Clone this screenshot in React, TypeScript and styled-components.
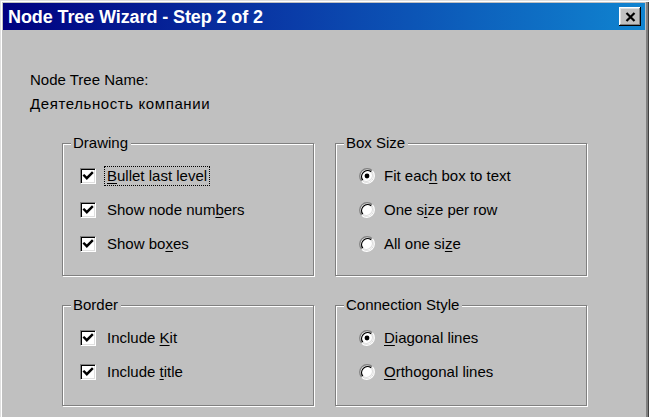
import React from "react";
import styled, { createGlobalStyle } from "styled-components";

const Global = createGlobalStyle`
  html, body { margin: 0; padding: 0; background: #c0c0c0; }
  body { font-family: "Liberation Sans", Arial, sans-serif; }
`;

const Window = styled.div`
  box-sizing: border-box;
  width: 649px;
  height: 417px;
  padding: 3px 4px 0 3px;
  background: #c0c0c0;
  box-shadow: inset 1px 1px #dfdfdf, inset 2px 2px #ffffff, inset -1px 0 #404040, inset -3px 0 #808080;
  display: flex;
  flex-direction: column;
  overflow: hidden;
`;

const TitleBar = styled.div`
  height: 27px;
  flex: none;
  display: flex;
  align-items: center;
  justify-content: space-between;
  padding: 0 4px 0 5px;
  background: linear-gradient(to right, #000080 0%, #0a3ca8 45%, #1084d0 100%);
`;

const Title = styled.span`
  color: #ffffff;
  font-family: "Liberation Sans", Arial, sans-serif;
  font-weight: bold;
  font-size: 18px;
  line-height: 20px;
  letter-spacing: -0.1px;
`;

const CloseButton = styled.div`
  width: 22px;
  height: 19px;
  background: #c0c0c0;
  box-shadow: inset -1px -1px #000000, inset 1px 1px #ffffff, inset -2px -2px #808080, inset 2px 2px #dfdfdf;
  display: flex;
  align-items: center;
  justify-content: center;
`;

const Body = styled.div`
  padding: 38px 0 0 27px;
  font-size: 15px;
  color: #000;
`;

const TextLine = styled.div<{ $spacing?: number }>`
  line-height: 24px;
  height: 24px;
  letter-spacing: ${(p) => p.$spacing ?? 0}px;
`;

const Grid = styled.div`
  margin: 27px 0 0 32px;
  display: grid;
  grid-template-columns: 252px 252px;
  grid-template-rows: 133px 101px;
  column-gap: 21px;
  row-gap: 29px;
`;

const Group = styled.div<{ $indent: number }>`
  position: relative;
  box-sizing: border-box;
  border: 1px solid #808080;
  box-shadow: inset 1px 1px #ffffff, 1px 1px #ffffff;
  padding: 15px 0 0 ${(p) => p.$indent}px;
`;

const Legend = styled.span`
  position: absolute;
  top: -9px;
  left: 8px;
  padding: 0 3px 0 2px;
  background: #c0c0c0;
  line-height: 16px;
  font-size: 15px;
`;

const Row = styled.div`
  height: 34px;
  display: flex;
  align-items: center;
`;

const Label = styled.span<{ $focused?: boolean; $gap: number }>`
  margin-left: ${(p) => p.$gap}px;
  padding: 1px 2px;
  line-height: 16px;
  border: 1px dotted ${(p) => (p.$focused ? "#000" : "transparent")};
  white-space: nowrap;
`;

const U = styled.span`
  text-decoration: underline;
  text-underline-offset: 2px;
`;

const CheckBoxFrame = styled.span`
  box-sizing: border-box;
  width: 16px;
  height: 16px;
  flex: none;
  background: #ffffff;
  border-top: 1px solid #808080;
  border-left: 1px solid #808080;
  border-bottom: 1px solid #ffffff;
  border-right: 1px solid #ffffff;
  box-shadow: inset 1px 1px #000000, inset -1px -1px #dfdfdf;
  display: flex;
  align-items: center;
  justify-content: center;
`;

const RadioFrame = styled.span`
  width: 16px;
  height: 16px;
  flex: none;
  display: flex;
`;

function CheckBox() {
  return (
    <CheckBoxFrame>
      <svg width="12" height="12" viewBox="0 0 12 12">
        <path d="M2.2 5.6 L4.8 8.2 L10 3" fill="none" stroke="#000" strokeWidth="2.4" strokeLinecap="square" />
      </svg>
    </CheckBoxFrame>
  );
}

function Radio({ checked }: { checked?: boolean }) {
  return (
    <RadioFrame>
      <svg width="16" height="16" viewBox="0 0 16 16">
        <circle cx="8" cy="8" r="6.5" fill="#ffffff" />
        <path d="M2.7 13.3 A7.5 7.5 0 0 1 13.3 2.7" fill="none" stroke="#808080" strokeWidth="1.2" />
        <path d="M13.3 2.7 A7.5 7.5 0 0 1 2.7 13.3" fill="none" stroke="#ffffff" strokeWidth="1.2" />
        <path d="M3.8 12.2 A6 6 0 0 1 12.2 3.8" fill="none" stroke="#000000" strokeWidth="1.3" />
        <path d="M12.2 3.8 A6 6 0 0 1 3.8 12.2" fill="none" stroke="#dfdfdf" strokeWidth="1.3" />
        {checked && <circle cx="8" cy="8" r="2.4" fill="#000" />}
      </svg>
    </RadioFrame>
  );
}

export default function App() {
  return (
    <>
      <Global />
      <Window>
        <TitleBar>
          <Title>Node Tree Wizard - Step 2 of 2</Title>
          <CloseButton>
            <svg width="11" height="10" viewBox="0 0 11 10">
              <path d="M1.5 1 L9.5 9 M9.5 1 L1.5 9" stroke="#000" strokeWidth="2.2" />
            </svg>
          </CloseButton>
        </TitleBar>
        <Body>
          <TextLine>Node Tree Name:</TextLine>
          <TextLine $spacing={0.6}>Деятельность компании</TextLine>
          <Grid>
            <Group $indent={17}>
              <Legend>Drawing</Legend>
              <Row>
                <CheckBox />
                <Label $gap={8} $focused>
                  <U>B</U>ullet last level
                </Label>
              </Row>
              <Row>
                <CheckBox />
                <Label $gap={8}>
                  Show node num<U>b</U>ers
                </Label>
              </Row>
              <Row>
                <CheckBox />
                <Label $gap={8}>
                  Show bo<U>x</U>es
                </Label>
              </Row>
            </Group>
            <Group $indent={23}>
              <Legend>Box Size</Legend>
              <Row>
                <Radio checked />
                <Label $gap={6}>
                  Fit eac<U>h</U> box to text
                </Label>
              </Row>
              <Row>
                <Radio />
                <Label $gap={6}>
                  One s<U>i</U>ze per row
                </Label>
              </Row>
              <Row>
                <Radio />
                <Label $gap={6}>
                  All one si<U>z</U>e
                </Label>
              </Row>
            </Group>
            <Group $indent={17}>
              <Legend>Border</Legend>
              <Row>
                <CheckBox />
                <Label $gap={8}>
                  Include <U>K</U>it
                </Label>
              </Row>
              <Row>
                <CheckBox />
                <Label $gap={8}>
                  Include <U>t</U>itle
                </Label>
              </Row>
            </Group>
            <Group $indent={23}>
              <Legend>Connection Style</Legend>
              <Row>
                <Radio checked />
                <Label $gap={6}>
                  <U>D</U>iagonal lines
                </Label>
              </Row>
              <Row>
                <Radio />
                <Label $gap={6}>
                  <U>O</U>rthogonal lines
                </Label>
              </Row>
            </Group>
          </Grid>
        </Body>
      </Window>
    </>
  );
}
